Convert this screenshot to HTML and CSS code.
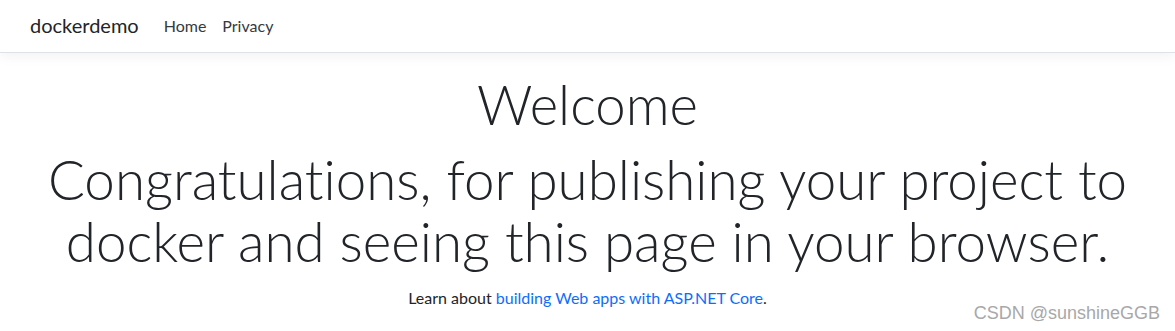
FILE: index.html
```html
<!DOCTYPE html>
<html lang="en">
<head>
    <meta charset="UTF-8">
    <meta name="viewport" content="width=device-width, initial-scale=1.0">
    <title>Home Page - dockerdemo</title>
    <link rel="stylesheet" href="styles.css">
</head>
<body>
    <header class="navbar">
        <a class="navbar-brand" href="#">dockerdemo</a>
        <nav class="nav">
            <a class="nav-link" href="#">Home</a>
            <a class="nav-link" href="#">Privacy</a>
        </nav>
    </header>

    <main class="main">
        <h1 class="welcome">Welcome</h1>
        <h1 class="congrats">Congratulations, for publishing your project to docker and seeing this page in your browser.</h1>
        <p class="learn">Learn about <a href="#">building Web apps with ASP.NET Core</a>.</p>
    </main>

    <div class="watermark">CSDN @sunshineGGB</div>
</body>
</html>
```

FILE: styles.css
```css
body {
    margin: 0;
    font-family: Lato, "Open Sans", sans-serif;
    font-variant-ligatures: none;
    color: #212529;
    background-color: #fff;
    height: 331px;
    overflow: hidden;
    position: relative;
}
a {
    text-decoration: none;
}
.navbar {
    display: flex;
    align-items: center;
    height: 50px;
    padding: 0 30px 2px;
    border-bottom: 1px solid #dee2e6;
    box-shadow: 0 4px 12px rgba(0,0,0,0.05);
}
.navbar-brand {
    color: #212529;
    font-size: 20px;
    margin-right: 25px;
}
.nav {
    display: flex;
    gap: 16px;
}
.nav-link {
    color: #343a40;
    font-size: 16px;
}
.main {
    text-align: center;
    padding: 0 20px;
}
.welcome,
.congrats {
    font-weight: 300;
    margin: 0;
}
.welcome {
    font-size: 54.5px;
    line-height: 66px;
    margin-top: 18px;
}
.congrats {
    font-size: 54.7px;
    line-height: 62px;
    margin-top: 11px;
}
.learn {
    margin: 14px 0 0;
    font-size: 16px;
    line-height: 24px;
}
.learn a {
    color: #0d6efd;
}
.watermark {
    position: absolute;
    right: 15px;
    bottom: 7px;
    font-family: "Liberation Sans", Arial, sans-serif;
    font-size: 18px;
    color: #a8a8a8;
}
```
